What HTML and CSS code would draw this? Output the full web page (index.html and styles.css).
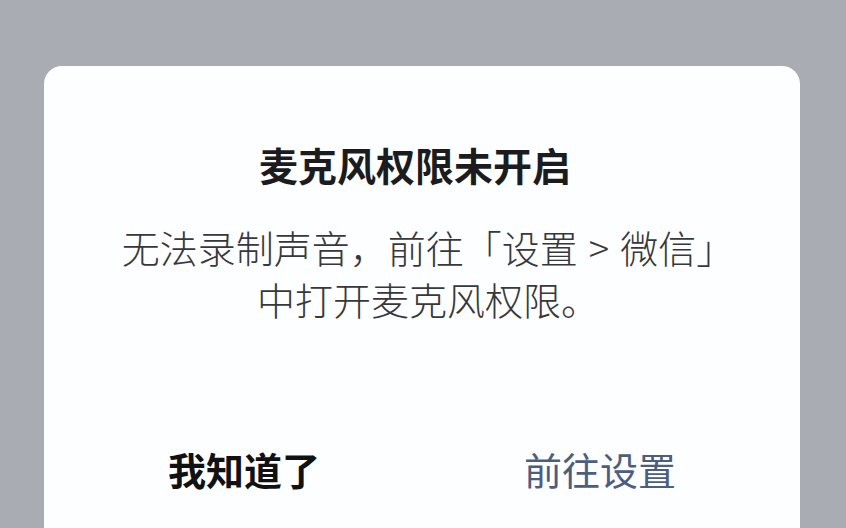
FILE: index.html
```html
<!DOCTYPE html>
<html lang="zh-CN">
<head>
    <meta charset="UTF-8">
    <meta name="viewport" content="width=device-width, initial-scale=1.0">
    <title>麦克风权限</title>

    <link rel="stylesheet" href="styles.css">
</head>
<body>

<div class="screen">
    <div class="dialog">
        <h1 class="dialog-title">麦克风权限未开启</h1>
        <p class="dialog-text">
            无法录制声音，前往「设置<span class="sep">&gt;</span>微信」<br>
            中打开麦克风权限。
        </p>
        <div class="dialog-actions">
            <button class="btn btn-cancel">我知道了</button>
            <button class="btn btn-ok">前往设置</button>
        </div>
    </div>
</div>

</body>
</html>
```

FILE: styles.css
```css
html, body {
    margin: 0;
    padding: 0;
    height: 100%;
    overflow: hidden;
}

body {
    font-family: "Noto Sans CJK SC", "Noto Sans", sans-serif;
    background-color: #a9acb3;
}

.screen {
    height: 528px;
    padding: 66px 46px 0 44px;
    box-sizing: border-box;
    overflow: hidden;
}

.dialog {
    background-color: #fdfeff;
    border-radius: 18px;
    height: 480px;
    padding-top: 75px;
    box-sizing: border-box;
    text-align: center;
}

.dialog-title {
    margin: 0;
    padding-right: 14px;
    font-size: 39px;
    line-height: 46px;
    font-weight: 700;
    color: #1c1c1e;
}

.dialog-text {
    margin: 34px 0 0;
    padding-left: 12px;
    font-size: 38px;
    line-height: 52px;
    font-weight: 300;
    color: #38383b;
}

/* the ">" between 设置 and 微信 sits with some air around it */
.sep {
    margin: 0 11px;
}

.dialog-actions {
    display: flex;
    justify-content: center;
    gap: 204px;
    margin-top: 121px;
}

.btn {
    background: none;
    border: none;
    padding: 0;
    font-family: inherit;
    font-size: 38px;
    line-height: 46px;
    cursor: pointer;
}

.btn-cancel {
    color: #111;
    font-weight: 700;
}

.btn-ok {
    color: #4d5d80;
    font-weight: 400;
}
```
